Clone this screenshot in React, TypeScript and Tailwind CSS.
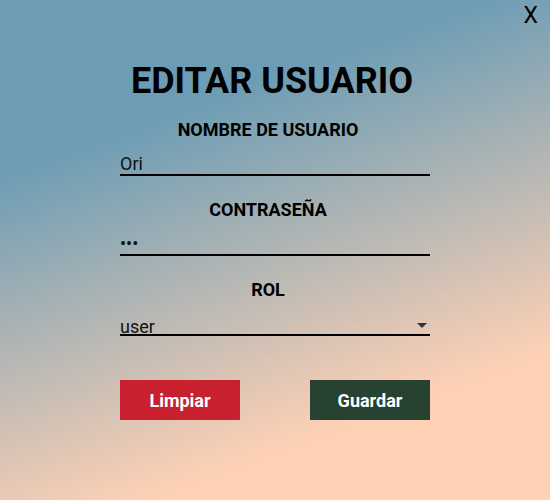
import React from "react";

const Field = ({ label, children }: { label: string; children: React.ReactNode }) => {
  return (
    <div className="flex flex-col">
      <label className="pr-[14px] text-center text-[18px] leading-5 font-bold text-black">
        {label}
      </label>
      <div className="mt-[13px]">{children}</div>
    </div>
  );
};

const App = () => {
  return (
    <div
      className="relative h-[500px] w-full overflow-hidden bg-[linear-gradient(160deg,#6d9db4_25%,#fed1b5_79%)] text-black"
      style={{ fontFamily: "Roboto, 'Noto Sans', sans-serif" }}
    >
      <button className="absolute top-[2px] right-[12px] text-[23px] leading-7 font-normal text-black">
        X
      </button>

      <form className="ml-[120px] flex w-[310px] flex-col pt-[59px]">
        <h1 className="pr-[6px] text-center text-[36px] leading-[44px] font-bold whitespace-nowrap">
          EDITAR USUARIO
        </h1>

        <div className="mt-[17px] flex flex-col gap-[24px]">
          <Field label="NOMBRE DE USUARIO">
            <input
              type="text"
              defaultValue="Ori"
              className="block h-[23px] w-full border-b-2 border-black bg-transparent p-0 text-[18px] text-[#111] outline-none"
            />
          </Field>

          <Field label="CONTRASEÑA">
            <input
              type="password"
              defaultValue="abc"
              className="block h-[23px] w-full border-b-2 border-black bg-transparent p-0 text-[18px] text-[#111] outline-none"
            />
          </Field>

          <Field label="ROL">
            <div className="relative">
              <select
                defaultValue="user"
                className="block h-[23px] w-full appearance-none border-b-2 border-black bg-transparent p-0 text-[18px] text-[#111] outline-none"
              >
                <option value="user">user</option>
                <option value="admin">admin</option>
              </select>
              <svg
                className="pointer-events-none absolute top-[10px] right-[3px]"
                width="10"
                height="5"
                viewBox="0 0 10 5"
              >
                <path d="M0 0 L10 0 L5 5 Z" fill="#333" />
              </svg>
            </div>
          </Field>
        </div>

        <div className="mt-[44px] flex justify-between">
          <button
            type="button"
            className="h-[40px] w-[120px] bg-[#c9202f] text-[18px] font-bold text-white"
          >
            Limpiar
          </button>
          <button
            type="button"
            className="h-[40px] w-[120px] bg-[#274230] text-[18px] font-bold text-white"
          >
            Guardar
          </button>
        </div>
      </form>
    </div>
  );
};

export default App;
